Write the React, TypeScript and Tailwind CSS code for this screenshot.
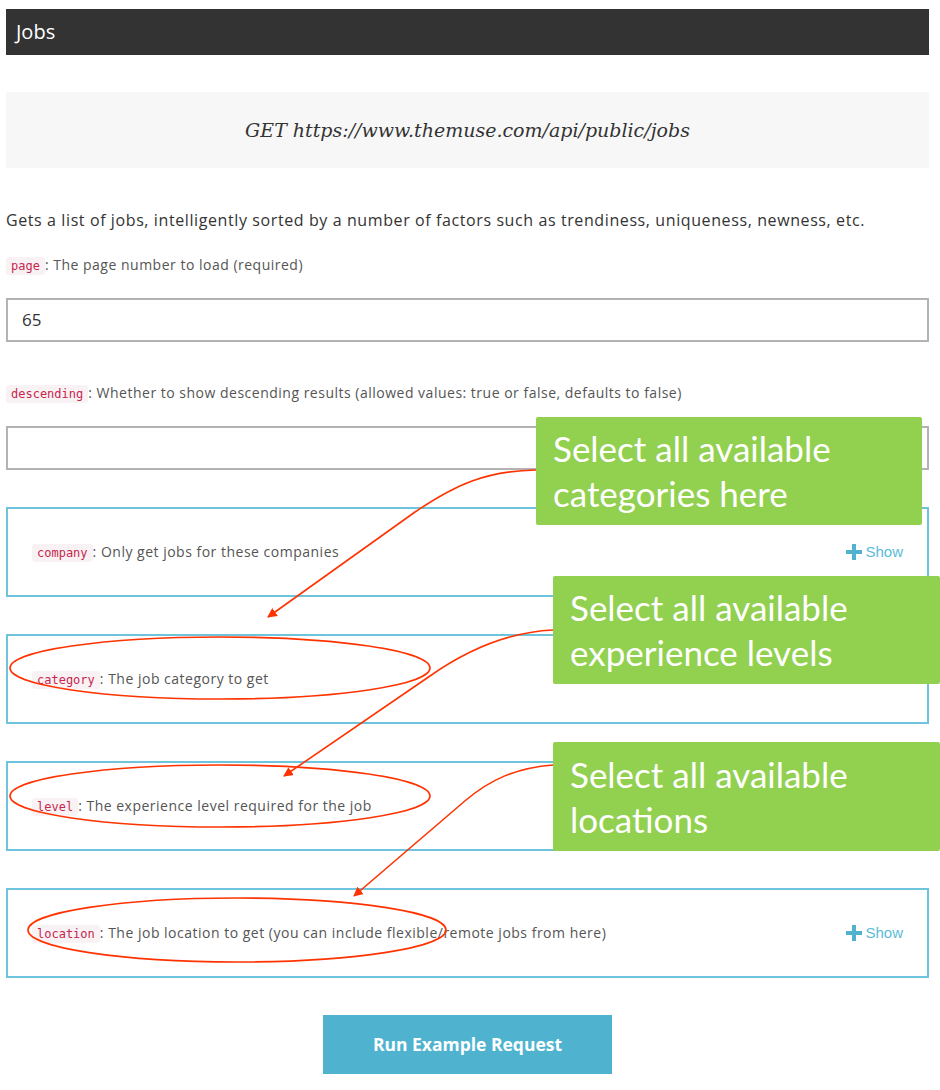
import React from 'react';

const sans = { fontFamily: '"Open Sans", Lato, sans-serif' };
const callFont = { fontFamily: 'Lato, "Open Sans", sans-serif' };

function Code({ children }: { children: React.ReactNode }) {
  return (
    <code className="rounded-[3px] bg-[#f9f2f4] px-[5px] py-[2px] text-[12px] tracking-normal text-[#c7254e] [font-family:'DejaVu_Sans_Mono',monospace]">
      {children}
    </code>
  );
}

function ParamLabel({ name, text }: { name: string; text: string }) {
  return (
    <p className="text-[14px] leading-[20px] tracking-[0.5px] text-[#555]">
      <Code>{name}</Code>: {text}
    </p>
  );
}

function ShowToggle() {
  return (
    <span className="flex items-center gap-[3px] text-[15px] text-[#5bbcd8] [font-family:'Liberation_Sans',sans-serif]">
      <svg width="16" height="16" viewBox="0 0 16 16" className="shrink-0">
        <path d="M6 0h4v6h6v4h-6v6H6v-6H0V6h6z" fill="#4fb3d0" />
      </svg>
      Show
    </span>
  );
}

function ParamBox({ name, text, show }: { name: string; text: string; show?: boolean }) {
  return (
    <div className="flex h-[90px] items-center justify-between border-2 border-[#6ec4dc] pl-[24px] pr-[24px]">
      <ParamLabel name={name} text={text} />
      {show && <ShowToggle />}
    </div>
  );
}

function Callout({ children, className }: { children: React.ReactNode; className: string }) {
  return (
    <div
      className={'absolute flex flex-col justify-center rounded-[2px] bg-[#92d050] px-[17px] text-[35px] leading-[45px] text-white ' + className}
      style={callFont}
    >
      {children}
    </div>
  );
}

export default function App() {
  return (
    <div className="relative h-[1090px] w-[940px] bg-white" style={sans}>
      <div className="w-[929px] pl-[6px] pt-[9px]">
        <div className="flex h-[46px] items-center bg-[#333] px-[10px] text-[20px] text-white">Jobs</div>

        <div className="mt-[37px] flex h-[76px] items-center justify-center bg-[#f7f7f7] text-[19px] italic text-[#333] [font-family:'DejaVu_Serif',serif]">
          GET https://www.themuse.com/api/public/jobs
        </div>

        <p className="mt-[41px] text-[16px] leading-[22px] tracking-[0.6px] text-[#333]">
          Gets a list of jobs, intelligently sorted by a number of factors such as trendiness, uniqueness, newness, etc.
        </p>

        <div className="mt-[24px]">
          <ParamLabel name="page" text="The page number to load (required)" />
        </div>
        <div className="mt-[22px] flex h-[44px] items-center border-2 border-[#b3b3b3] px-[14px] text-[17px] text-[#333]">65</div>

        <div className="mt-[41px]">
          <ParamLabel
            name="descending"
            text="Whether to show descending results (allowed values: true or false, defaults to false)"
          />
        </div>
        <div className="mt-[22px] h-[44px] border-2 border-[#b3b3b3]" />

        <div className="mt-[37px] flex flex-col gap-[37px]">
          <ParamBox name="company" text="Only get jobs for these companies" show />
          <ParamBox name="category" text="The job category to get" />
          <ParamBox name="level" text="The experience level required for the job" />
          <ParamBox name="location" text="The job location to get (you can include flexible/remote jobs from here)" show />
        </div>

        <div className="mt-[37px] flex justify-center">
          <button
            type="button"
            className="h-[59px] w-[289px] bg-[#4fb3d0] text-[17.5px] font-bold text-white"
          >
            Run Example Request
          </button>
        </div>
      </div>

      <svg className="pointer-events-none absolute left-0 top-0" width="940" height="1090" viewBox="0 0 940 1090">
        <defs>
          <marker id="ah" viewBox="0 0 10 10" refX="9" refY="5" markerWidth="6" markerHeight="6" orient="auto-start-reverse">
            <path d="M0 0L10 5L0 10z" fill="#ff3300" />
          </marker>
        </defs>
        <g fill="none" stroke="#ff3300" strokeWidth="1.6">
          <ellipse cx="220" cy="668" rx="210" ry="31" />
          <ellipse cx="220" cy="796" rx="210" ry="31" />
          <ellipse cx="237" cy="930" rx="209" ry="32" />
          <path d="M536 470 C485 471 455 485 415 512 L268 617" markerEnd="url(#ah)" />
          <path d="M553 630 C510 632 470 648 430 676 L284 776" markerEnd="url(#ah)" />
          <path d="M553 765 C515 768 490 780 466 800 L354 896" markerEnd="url(#ah)" />
        </g>
      </svg>

      <Callout className="left-[536px] top-[417px] h-[108px] w-[386px]">
        <span>Select all available</span>
        <span>categories here</span>
      </Callout>
      <Callout className="left-[553px] top-[576px] h-[108px] w-[387px]">
        <span>Select all available</span>
        <span>experience levels</span>
      </Callout>
      <Callout className="left-[553px] top-[742px] h-[109px] w-[387px]">
        <span>Select all available</span>
        <span>locations</span>
      </Callout>
    </div>
  );
}
